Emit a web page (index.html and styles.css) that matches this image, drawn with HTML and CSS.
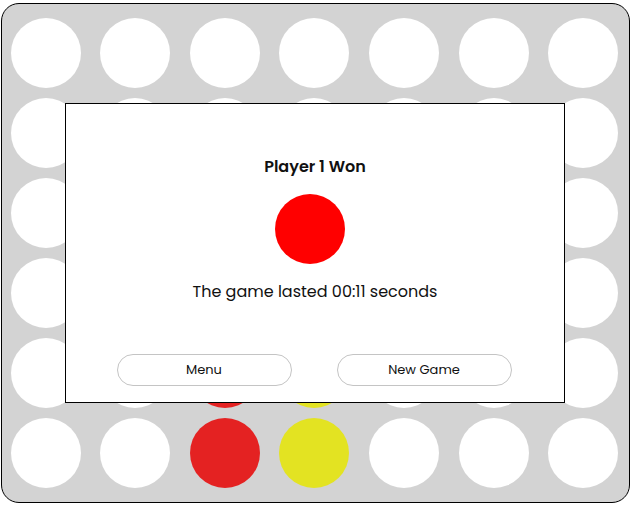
FILE: index.html
```html
<!DOCTYPE html>
<html lang="en">
<head>
<meta charset="utf-8">
<title>Connect Four</title>
<link rel="stylesheet" href="styles.css">
</head>
<body>
<div class="board">
  <div class="grid">
    <div class="cell"></div><div class="cell"></div><div class="cell"></div><div class="cell"></div><div class="cell"></div><div class="cell"></div><div class="cell"></div>
    <div class="cell"></div><div class="cell"></div><div class="cell"></div><div class="cell"></div><div class="cell"></div><div class="cell"></div><div class="cell"></div>
    <div class="cell"></div><div class="cell"></div><div class="cell"></div><div class="cell"></div><div class="cell"></div><div class="cell"></div><div class="cell"></div>
    <div class="cell"></div><div class="cell"></div><div class="cell"></div><div class="cell"></div><div class="cell"></div><div class="cell"></div><div class="cell"></div>
    <div class="cell"></div><div class="cell"></div><div class="cell red"></div><div class="cell yellow"></div><div class="cell"></div><div class="cell"></div><div class="cell"></div>
    <div class="cell"></div><div class="cell"></div><div class="cell red"></div><div class="cell yellow"></div><div class="cell"></div><div class="cell"></div><div class="cell"></div>
  </div>
  <div class="modal">
    <h2 class="modal-title">Player 1 Won</h2>
    <div class="winner-chip"></div>
    <p class="modal-text">The game lasted 00:11 seconds</p>
    <div class="modal-actions">
      <button class="btn">Menu</button>
      <button class="btn">New Game</button>
    </div>
  </div>
</div>
</body>
</html>
```
FILE: styles.css
```css
* { box-sizing: border-box; }
html, body { margin: 0; padding: 0; background: #ffffff; }
body {
  font-family: "Poppins", "Open Sans", "DejaVu Sans", sans-serif;
  color: #111;
  padding: 3px 0 0 1px;
}
.board {
  position: relative;
  width: 629px;
  height: 500px;
  background: #d3d3d3;
  border: 1px solid #000;
  border-radius: 18px;
}
.grid {
  display: grid;
  grid-template-columns: repeat(7, 70px);
  grid-template-rows: repeat(6, 70px);
  column-gap: 19.67px;
  row-gap: 10px;
  padding: 14px 0 0 8.5px;
}
.cell {
  width: 70px;
  height: 70px;
  border-radius: 50%;
  background: #ffffff;
}
.cell.red { background: #e42222; }
.cell.yellow { background: #e3e322; }
.modal {
  position: absolute;
  left: 63px;
  top: 99px;
  width: 500px;
  height: 300px;
  background: #fff;
  border: 1px solid #000;
  display: flex;
  flex-direction: column;
  align-items: center;
  padding-top: 51px;
}
.modal-title {
  margin: 0;
  font-size: 16px;
  line-height: 24px;
  font-weight: 600;
}
.winner-chip {
  width: 70px;
  height: 70px;
  border-radius: 50%;
  background: #ff0000;
  margin: 15px 10px 0 0;
}
.modal-text {
  margin: 16px 0 0;
  font-size: 16px;
  line-height: 24px;
  font-weight: 400;
}
.modal-actions {
  margin-top: 50px;
  display: flex;
  gap: 45px;
  padding-right: 2px;
}
.btn {
  width: 175px;
  height: 32px;
  border: 1px solid #c4c4c4;
  border-radius: 16px;
  background: #fff;
  font-family: inherit;
  font-size: 13px;
  color: #111;
  padding: 0;
}
```
